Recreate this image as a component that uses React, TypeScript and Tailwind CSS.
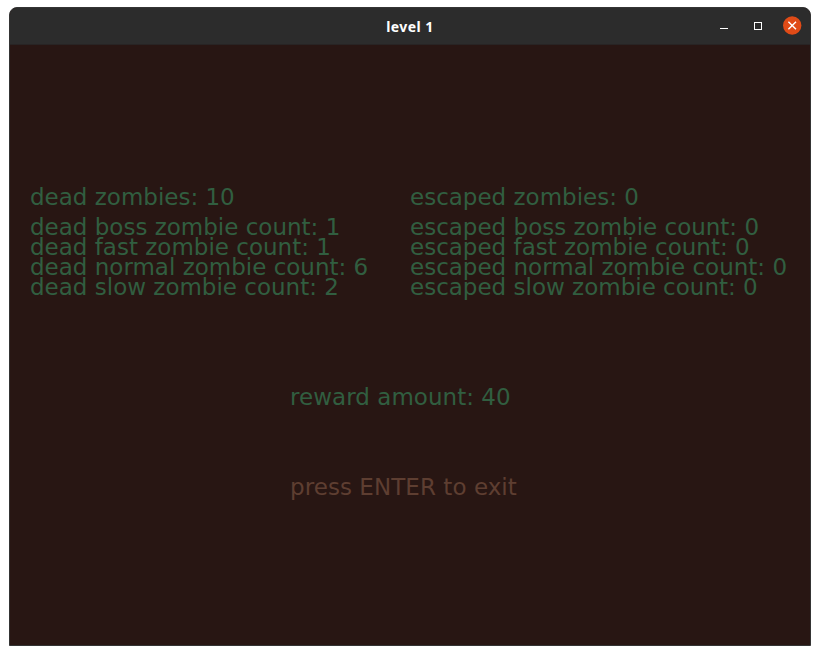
const dead = ["dead boss zombie count: 1", "dead fast zombie count: 1", "dead normal zombie count: 6", "dead slow zombie count: 2"];
const escaped = ["escaped boss zombie count: 0", "escaped fast zombie count: 0", "escaped normal zombie count: 0", "escaped slow zombie count: 0"];

function Stats({ title, rows }: { title: string; rows: string[] }) {
  return (
    <section className="w-[380px] whitespace-nowrap">
      <h2 className="h-[30px]">{title}</h2>
      {rows.map((r) => (
        <p key={r} className="h-5">{r}</p>
      ))}
    </section>
  );
}

function WindowControls() {
  return (
    <div className="flex items-center justify-end gap-[25px] pr-2 pb-px">
      <button aria-label="Minimize" className="h-[9px] w-[9px] pt-[6px]">
        <span className="block h-px w-2 bg-white" />
      </button>
      <button aria-label="Maximize" className="h-2 w-2 border border-white" />
      <button aria-label="Close" className="-ml-1">
        <svg className="block" width="19" height="19" viewBox="0 0 19 19">
          <circle cx="9.2" cy="9.5" r="9.2" fill="#e04b17" />
          <path d="M5.4 5.7l7.6 7.6M13 5.7l-7.6 7.6" stroke="#fff" strokeWidth="1.4" />
        </svg>
      </button>
    </div>
  );
}

export default function App() {
  return (
    <div className="h-[655px] w-[820px] overflow-hidden bg-white pl-[9px] pt-[7px]">
      <div className="h-[639px] w-[802px] overflow-hidden rounded-t-lg border border-[#343434] bg-[#281613]">
        <header className="grid h-[37px] grid-cols-[1fr_auto_1fr] items-center border-b border-[#282424] bg-[#2c2c2c]">
          <span />
          <h1 className="font-['Noto_Sans',sans-serif] text-[14px] font-bold tracking-[0.45px] text-white">level 1</h1>
          <WindowControls />
        </header>
        <main className="pl-5 pt-[142px] font-['DejaVu_Sans',sans-serif] text-[23px] leading-5 text-[#315e40]">
          <div className="flex">
            <Stats title="dead zombies: 10" rows={dead} />
            <Stats title="escaped zombies: 0" rows={escaped} />
          </div>
          <p className="ml-[260px] mt-[90px] tracking-[0.04px]">reward amount: 40</p>
          <p className="ml-[260px] mt-[70px] tracking-[0.06px] text-[#5e3e31]">press ENTER to exit</p>
        </main>
      </div>
    </div>
  );
}
